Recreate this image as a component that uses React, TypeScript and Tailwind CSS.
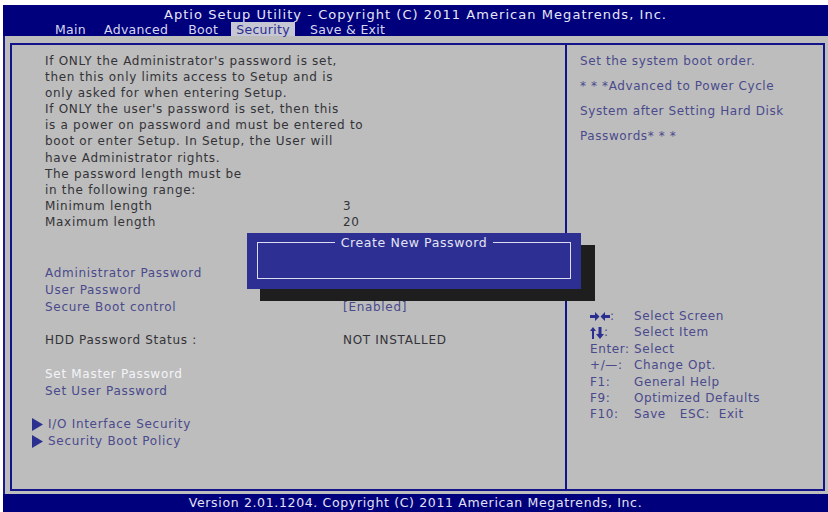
import React from "react"

const font = { fontFamily: '"DejaVu Sans", "Liberation Sans", sans-serif' }

const intro = [
  "If ONLY the Administrator's password is set,",
  "then this only limits access to Setup and is",
  "only asked for when entering Setup.",
  "If ONLY the user's password is set, then this",
  "is a power on password and must be entered to",
  "boot or enter Setup. In Setup, the User will",
  "have Administrator rights.",
  "The password length must be",
  "in the following range:",
]

function Tri() {
  return (
    <svg width="11" height="13" viewBox="0 0 11 13" className="mr-[5px] shrink-0">
      <polygon points="0,0 11,6.5 0,13" fill="#2b2f8f" />
    </svg>
  )
}

function LeftRight() {
  return (
    <svg width="20" height="9" viewBox="0 0 20 9">
      <polygon points="0,3 5,3 5,0 9.5,4.5 5,9 5,6 0,6" fill="#2b2f8f" />
      <polygon points="20,3 15,3 15,0 10.5,4.5 15,9 15,6 20,6" fill="#2b2f8f" />
    </svg>
  )
}

function UpDown() {
  return (
    <svg width="14" height="12" viewBox="0 0 14 12">
      <polygon points="3,0 6,4 4,4 4,12 2,12 2,4 0,4" fill="#2b2f8f" />
      <polygon points="8.5,0 11.5,0 11.5,7 14,7 10,12 6,7 8.5,7" fill="#2b2f8f" />
    </svg>
  )
}

export default function App() {
  return (
    <div className="w-[828px] h-[512px] bg-white pt-[5px] pl-[3px] flex flex-col overflow-hidden" style={font}>
      {/* Title bar */}
      <div className="h-[31px] bg-[#00007c] relative shrink-0">
        <div className="absolute left-0 right-0 top-[2px] text-center text-[13px] tracking-[1.05px] text-[#e6e6f5] leading-[16px]">
          Aptio Setup Utility - Copyright (C) 2011 American Megatrends, Inc.
        </div>
        <div className="absolute left-[52px] bottom-0 flex items-end text-[12.5px] leading-[13px] text-[#d6d6ef] tracking-[0.3px]">
          <span>Main</span>
          <span className="ml-[18px]">Advanced</span>
          <span className="ml-[20px]">Boot</span>
          <span className="ml-[13px] px-[5px] pt-[1px] bg-[#c6c6d4] text-[#2b2f8f]">Security</span>
          <span className="ml-[15px]">Save &amp; Exit</span>
        </div>
      </div>

      {/* Body */}
      <div className="flex-1 bg-[#bdbdbd] border-l-2 border-[#1a1a8a] pt-[7px] pl-[5px] pr-[3px] pb-[3px] flex">
        <div className="flex-1 border-2 border-[#14148a] flex relative">
          {/* Left panel */}
          <div className="w-[555px] border-r-2 border-[#14148a] pl-[33px] pt-[8px] text-[12px] tracking-[0.7px]">
            <div className="leading-[16.1px] text-[#333338]">
              {intro.map((l) => (
                <div key={l}>{l}</div>
              ))}
              <div className="flex">
                <span className="w-[298px]">Minimum length</span>
                <span>3</span>
              </div>
              <div className="flex">
                <span className="w-[298px]">Maximum length</span>
                <span>20</span>
              </div>
            </div>

            <div className="mt-[35px] leading-[16.8px] text-[#4a4a8c]">
              <div>Administrator Password</div>
              <div>User Password</div>
              <div className="flex">
                <span className="w-[298px]">Secure Boot control</span>
                <span>[Enabled]</span>
              </div>
              <div className="h-[16.8px]" />
              <div className="flex text-[#333338]">
                <span className="w-[298px]">HDD Password Status :</span>
                <span>NOT INSTALLED</span>
              </div>
              <div className="h-[16.8px]" />
              <div className="text-[#f4f4f8]">Set Master Password</div>
              <div>Set User Password</div>
              <div className="h-[16.8px]" />
              <div className="flex items-center -ml-[13px]">
                <Tri />
                <span>I/O Interface Security</span>
              </div>
              <div className="flex items-center -ml-[13px]">
                <Tri />
                <span>Security Boot Policy</span>
              </div>
            </div>
          </div>

          {/* Right panel */}
          <div className="flex-1 pl-[13px] pt-[4px] text-[12px] tracking-[0.6px] text-[#4a4a8c]">
            <div className="leading-[25px]">
              <div>Set the system boot order.</div>
              <div>* * *Advanced to Power Cycle</div>
              <div>System after Setting Hard Disk</div>
              <div>Passwords* * *</div>
            </div>
            <div className="mt-[159px] pl-[10px] leading-[16.4px]">
              <div className="flex items-center">
                <span className="w-[44px] flex items-center"><LeftRight />:</span>
                <span>Select Screen</span>
              </div>
              <div className="flex items-center">
                <span className="w-[44px] flex items-center"><UpDown />:</span>
                <span>Select Item</span>
              </div>
              <div className="flex">
                <span className="w-[44px]">Enter:</span>
                <span>Select</span>
              </div>
              <div className="flex">
                <span className="w-[44px]">+/—:</span>
                <span>Change Opt.</span>
              </div>
              <div className="flex">
                <span className="w-[44px]">F1:</span>
                <span>General Help</span>
              </div>
              <div className="flex">
                <span className="w-[44px]">F9:</span>
                <span>Optimized Defaults</span>
              </div>
              <div className="flex">
                <span className="w-[44px]">F10:</span>
                <span>Save</span>
                <span className="ml-[14px]">ESC:&nbsp; Exit</span>
              </div>
            </div>
          </div>

          {/* Popup */}
          <div className="absolute left-[248px] top-[200px] w-[335px] h-[56px] bg-[#1e1e1e]" />
          <div className="absolute left-[235px] top-[188px] w-[334px] h-[56px] bg-[#2d3092]">
            <div className="absolute left-[10px] top-[9px] w-[314px] h-[37px] border-[1.5px] border-[#dcdcf0]" />
            <div className="absolute left-0 right-0 top-[2px] flex justify-center">
              <span className="bg-[#2d3092] px-[6px] text-[12.5px] leading-[15px] tracking-[0.6px] text-[#e4e4f4]">
                Create New Password
              </span>
            </div>
          </div>
        </div>
      </div>

      {/* Footer */}
      <div className="h-[18px] bg-[#00007c] shrink-0 text-center text-[12.5px] leading-[18px] tracking-[0.65px] text-[#e2e2f2]">
        Version 2.01.1204. Copyright (C) 2011 American Megatrends, Inc.
      </div>
    </div>
  )
}
